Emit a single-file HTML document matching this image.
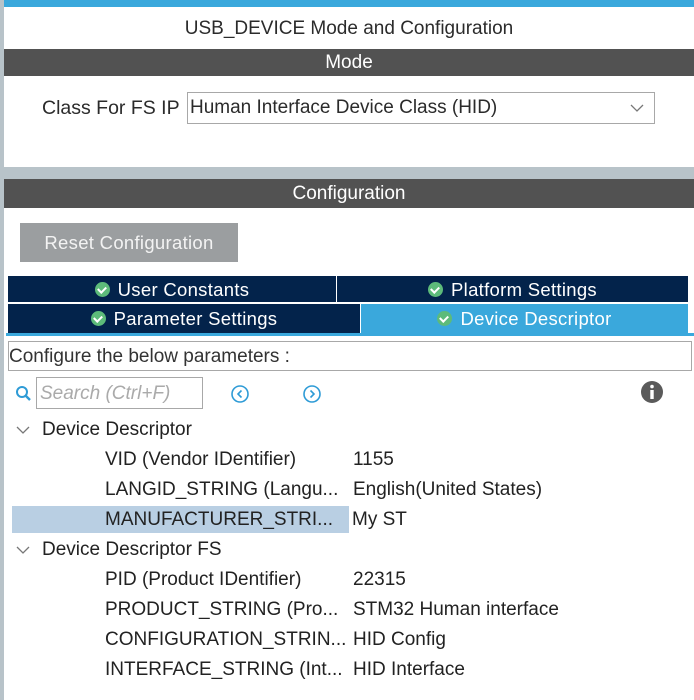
<!DOCTYPE html>
<html><head><meta charset="utf-8"><style>
*{margin:0;padding:0;box-sizing:border-box}
body{width:694px;height:700px;overflow:hidden;background:#fff;font-family:"Liberation Sans",sans-serif;color:#2b2b2b;position:relative}
.a{position:absolute;white-space:nowrap}
.bar{position:absolute;left:4px;right:0;background:#525252;color:#fff;text-align:center;font-size:19px}
.tab{position:absolute;background:#03234b;color:#fff;font-size:18.5px;text-align:center;letter-spacing:0.3px}
.chk{display:inline-block;width:15px;height:15px;border-radius:50%;background:#5dbb7a;vertical-align:-1px;margin-right:8px;position:relative}
.chk:after{content:"";position:absolute;left:4px;top:3px;width:4px;height:6px;border:solid #fff;border-width:0 2px 2px 0;transform:rotate(45deg)}
.t{position:absolute;font-size:19px;color:#222;white-space:nowrap}
</style></head><body>
<div class="a" style="left:0;top:0;width:694px;height:7px;background:#3aa8dc"></div>
<div class="a" style="left:0;top:0;width:4px;height:700px;background:#b8c3c9"></div>
<div class="a" style="left:4px;top:18px;width:690px;text-align:center;font-size:19px">USB_DEVICE Mode and Configuration</div>
<div class="bar" style="top:49px;height:27px;line-height:27px">Mode</div>
<div class="a" style="left:42px;top:97px;font-size:19.5px">Class For FS IP</div>
<div class="a" style="left:187px;top:92px;width:468px;height:32px;border:1px solid #a8a8a8;font-size:19px;line-height:30px;padding-left:2px">Human Interface Device Class (HID)
<svg style="position:absolute;right:10px;top:10px" width="14" height="10"><path d="M1 2 L7 8 L13 2" stroke="#777" stroke-width="1.3" fill="none"/></svg></div>
<div class="a" style="left:4px;top:167px;width:690px;height:12px;background:#b8c3c9"></div>
<div class="bar" style="top:179px;height:29px;line-height:29px">Configuration</div>
<div class="a" style="left:20px;top:223px;width:218px;height:39px;background:#9b9ea0;color:#f3f3f3;font-size:18.5px;line-height:39px;text-align:center;letter-spacing:0.3px">Reset Configuration</div>
<div class="tab" style="left:8px;top:276px;width:328px;height:26px;line-height:27px"><span class="chk"></span>User Constants</div>
<div class="tab" style="left:337px;top:276px;width:351px;height:26px;line-height:27px"><span class="chk"></span>Platform Settings</div>
<div class="tab" style="left:8px;top:304px;width:352px;height:30px;line-height:30px"><span class="chk"></span>Parameter Settings</div>
<div class="tab" style="left:361px;top:304px;width:327px;height:30px;line-height:30px;background:#3aa8dc"><span class="chk"></span>Device Descriptor</div>
<div class="a" style="left:6px;top:333px;width:688px;height:3px;background:#3aa8dc"></div>
<div class="a" style="left:8px;top:341px;width:684px;height:30px;border:1px solid #a8a8a8;font-size:19px;line-height:29px;padding-left:0px;color:#333">Configure the below parameters :</div>
<svg class="a" style="left:15px;top:385px" width="18" height="18"><circle cx="7" cy="7" r="5" stroke="#2e9bd6" stroke-width="2" fill="none"/><path d="M11 11 L15 15" stroke="#2e9bd6" stroke-width="2.4"/></svg>
<div class="a" style="left:36px;top:377px;width:167px;height:32px;border:1px solid #a8a8a8;font-size:19px;font-style:italic;color:#aaa;line-height:31px;padding-left:3px">Search (Ctrl+F)</div>
<svg class="a" style="left:230px;top:384px" width="20" height="20"><circle cx="10" cy="10" r="8" stroke="#2e9bd6" stroke-width="1.6" fill="none"/><path d="M11.5 6.5 L8 10 L11.5 13.5" stroke="#2e9bd6" stroke-width="1.6" fill="none"/></svg>
<svg class="a" style="left:302px;top:384px" width="20" height="20"><circle cx="10" cy="10" r="8" stroke="#2e9bd6" stroke-width="1.6" fill="none"/><path d="M8.5 6.5 L12 10 L8.5 13.5" stroke="#2e9bd6" stroke-width="1.6" fill="none"/></svg>
<svg class="a" style="left:640px;top:380px" width="24" height="24"><circle cx="12" cy="12" r="11" fill="#5a5a5a"/><circle cx="12" cy="6.5" r="1.8" fill="#fff"/><rect x="10.3" y="10" width="3.4" height="9" fill="#fff"/></svg>
<div class="a" style="left:12px;top:506px;width:337px;height:27px;background:#b9cfe3"></div>
<svg class="a" style="left:16px;top:425px" width="14" height="10"><path d="M1 2 L7 8 L13 2" stroke="#777" stroke-width="1.3" fill="none"/></svg>
<svg class="a" style="left:16px;top:545px" width="14" height="10"><path d="M1 2 L7 8 L13 2" stroke="#777" stroke-width="1.3" fill="none"/></svg>
<div class="t" style="left:42px;top:419px">Device Descriptor</div>
<div class="t" style="left:105px;top:449px">VID (Vendor IDentifier)</div><div class="t" style="left:353px;top:449px">1155</div>
<div class="t" style="left:105px;top:479px">LANGID_STRING (Langu...</div><div class="t" style="left:353px;top:479px">English(United States)</div>
<div class="t" style="left:105px;top:509px">MANUFACTURER_STRI...</div><div class="t" style="left:352px;top:509px">My ST</div>
<div class="t" style="left:42px;top:539px">Device Descriptor FS</div>
<div class="t" style="left:105px;top:569px">PID (Product IDentifier)</div><div class="t" style="left:353px;top:569px">22315</div>
<div class="t" style="left:105px;top:599px">PRODUCT_STRING (Pro...</div><div class="t" style="left:353px;top:599px">STM32 Human interface</div>
<div class="t" style="left:105px;top:629px">CONFIGURATION_STRIN...</div><div class="t" style="left:353px;top:629px">HID Config</div>
<div class="t" style="left:105px;top:659px">INTERFACE_STRING (Int...</div><div class="t" style="left:353px;top:659px">HID Interface</div>
</body></html>
